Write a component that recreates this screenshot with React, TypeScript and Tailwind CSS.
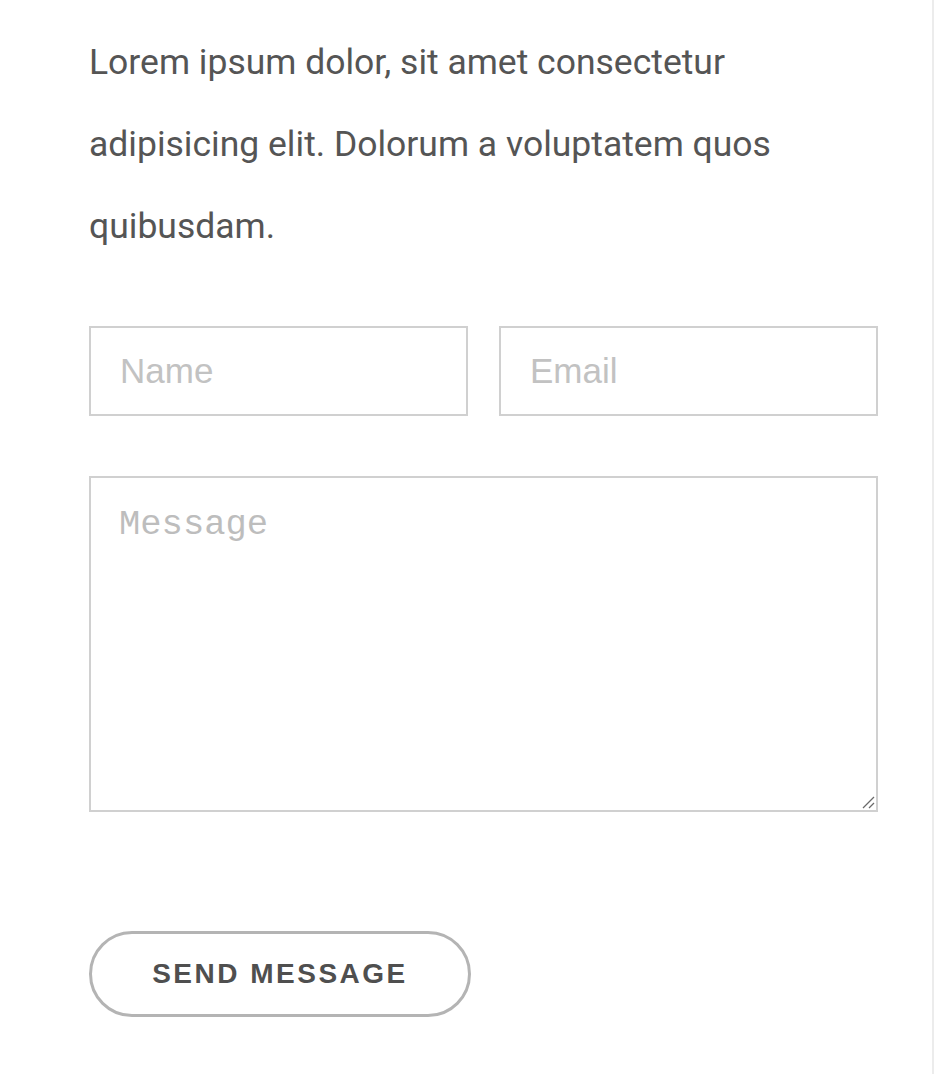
import React from "react";

export default function App() {
  return (
    <div className="w-[934px] min-h-[1074px] bg-white border-r-2 border-[#ececec]">
      <div className="pl-[89px] pt-[21px] w-[878px]">
        <p
          className="text-[35.5px] leading-[82px] text-[#555555] w-[740px]"
          style={{ fontFamily: "Roboto, sans-serif" }}
        >
          Lorem ipsum dolor, sit amet consectetur adipisicing elit. Dolorum a voluptatem quos quibusdam.
        </p>
        <form className="mt-[59px] flex flex-col" onSubmit={(e) => e.preventDefault()}>
          <div className="flex gap-[31px]">
            <input
              type="text"
              placeholder="Name"
              className="w-[379px] h-[90px] border-2 border-[#d0d0d0] px-[29px] text-[35px] text-[#555] placeholder:text-[#c2c2c2] outline-none"
              style={{ fontFamily: "'Liberation Sans', Arial, sans-serif" }}
            />
            <input
              type="email"
              placeholder="Email"
              className="w-[379px] h-[90px] border-2 border-[#d0d0d0] px-[29px] text-[35px] text-[#555] placeholder:text-[#c2c2c2] outline-none"
              style={{ fontFamily: "'Liberation Sans', Arial, sans-serif" }}
            />
          </div>
          <div className="relative mt-[60px] w-[789px] h-[336px]">
            <textarea
              placeholder="Message"
              className="block w-full h-full resize-none border-2 border-[#d0d0d0] px-[28px] pt-[27px] text-[35.5px] leading-[40px] text-[#555] placeholder:text-[#bdbdbd] outline-none"
              style={{ fontFamily: "'Liberation Mono', 'Courier New', monospace" }}
            />
            <svg
              className="absolute right-[3px] bottom-[3px]"
              width="14"
              height="14"
              viewBox="0 0 14 14"
            >
              <line x1="2" y1="13" x2="13" y2="2" stroke="#6a6a6a" strokeWidth="1.2" />
              <line x1="8" y1="13" x2="13" y2="8" stroke="#6a6a6a" strokeWidth="1.2" />
            </svg>
          </div>
          <div className="mt-[119px]">
            <button
              type="submit"
              className="w-[382px] h-[86px] rounded-full border-[3px] border-[#b4b4b4] bg-white text-[28px] font-bold tracking-[2.5px] text-[#4f4f4f] flex items-center justify-center"
              style={{ fontFamily: "'Liberation Sans', Arial, sans-serif" }}
            >
              SEND MESSAGE
            </button>
          </div>
        </form>
      </div>
    </div>
  );
}
